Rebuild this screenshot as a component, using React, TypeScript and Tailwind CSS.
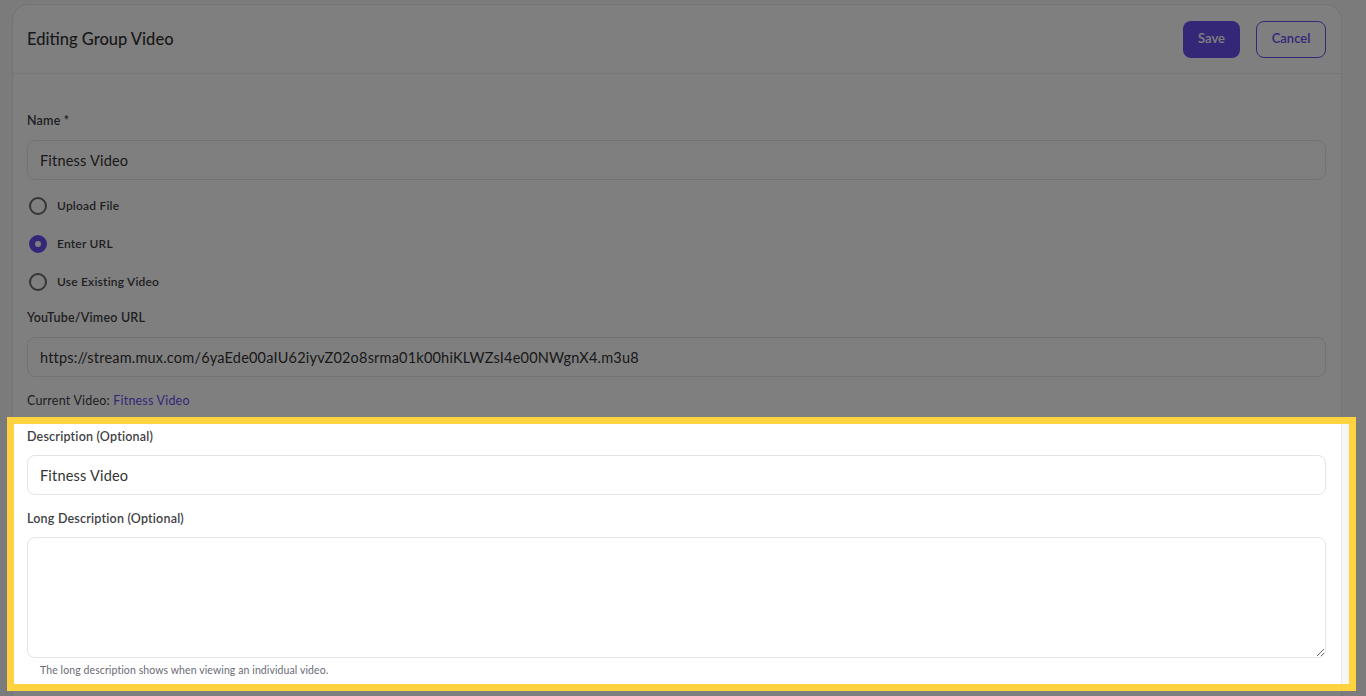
import { useState } from "react";

type Choice = "upload" | "url" | "existing";

const OPTIONS: { id: Choice; label: string }[] = [
  { id: "upload", label: "Upload File" },
  { id: "url", label: "Enter URL" },
  { id: "existing", label: "Use Existing Video" },
];

function Label({ children }: { children: React.ReactNode }) {
  return <label className="block text-[12.5px] font-semibold leading-4 tracking-[0.2px] text-[#3f3f46]">{children}</label>;
}

function TextInput({ value }: { value: string }) {
  return (
    <input
      defaultValue={value}
      className="block h-10 w-full rounded-lg border border-[#e4e4e7] bg-white px-3 text-[14.5px] tracking-[0.2px] text-[#333] outline-none"
    />
  );
}

export default function App() {
  const [choice, setChoice] = useState<Choice>("url");

  return (
    <div
      className="h-screen overflow-hidden bg-[#f7f7f8] px-[12px] pt-[4px]"
      style={{ fontFamily: "Lato, 'Noto Sans', sans-serif" }}
    >
      <div className="mr-[12px] rounded-2xl border border-[#e8e8ec] bg-white pb-10">
        {/* header */}
        <div className="flex h-[69px] items-center justify-between border-b border-[#ececef] pl-[14px] pr-[15px]">
          <h1 className="text-[16.5px] font-medium text-[#333]">Editing Group Video</h1>
          <div className="flex items-center gap-4">
            <button className="h-[37px] w-[57px] rounded-lg bg-[#6b4ef0] text-[13px] font-semibold text-white">Save</button>
            <button className="h-[37px] w-[70px] rounded-lg border-[1.5px] border-[#6b4ef0] text-[13px] font-semibold text-[#6b4ef0]">
              Cancel
            </button>
          </div>
        </div>

        {/* body */}
        <div className="pl-[14px] pr-[15px] pt-[39px]">
          <Label>Name *</Label>
          <div className="mt-[11px]">
            <TextInput value="Fitness Video" />
          </div>

          <div className="mt-4 flex flex-col gap-[18px]">
            {OPTIONS.map((o) => {
              const on = choice === o.id;
              return (
                <button key={o.id} onClick={() => setChoice(o.id)} className="flex h-5 items-center gap-[10px] pl-[2px]">
                  <span
                    className={`h-[18px] w-[18px] rounded-full bg-white ${
                      on ? "border-[6px] border-[#6b4ef0]" : "border-2 border-[#6b6b6b]"
                    }`}
                  />
                  <span className="text-[12px] font-semibold tracking-[0.2px] text-[#3f3f46]">{o.label}</span>
                </button>
              );
            })}
          </div>

          <div className="mt-[18px]">
            <Label>YouTube/Vimeo URL</Label>
          </div>
          <div className="mt-[11px]">
            <TextInput value="https://stream.mux.com/6yaEde00aIU62iyvZ02o8srma01k00hiKLWZsI4e00NWgnX4.m3u8" />
          </div>

          <p className="mt-4 text-[12.5px] leading-4 tracking-[0.2px] text-[#3f3f46]">
            Current Video: <a className="text-[#6b4ef0]">Fitness Video</a>
          </p>

          {/* highlighted section */}
          <section className="relative z-10 -ml-[13px] -mr-[23px] mt-[15px] flex bg-white shadow-[0_0_0_9999px_rgba(0,0,0,0.5)] outline-[7px] outline-solid outline-[#ffd23f]">
            <div className="flex-1 pb-[7px] pl-[13px] pr-[15px] pt-[5px]">
              <Label>Description (Optional)</Label>
              <div className="mt-[10px]">
                <TextInput value="Fitness Video" />
              </div>
              <div className="mt-4">
                <Label>Long Description (Optional)</Label>
              </div>
              <textarea className="mt-[10px] block h-[121px] w-full rounded-lg border border-[#e4e4e7] bg-white px-3 py-2 text-[14px] text-[#333] outline-none" />
              <p className="mt-[5px] pl-[13px] text-[10.5px] leading-[14px] tracking-[0.1px] text-[#6b6b76]">
                The long description shows when viewing an individual video.
              </p>
            </div>
            <div className="w-[8px] shrink-0 border-l border-[#e8e8ec] bg-[#f7f7f8]" />
          </section>
        </div>
      </div>
    </div>
  );
}
